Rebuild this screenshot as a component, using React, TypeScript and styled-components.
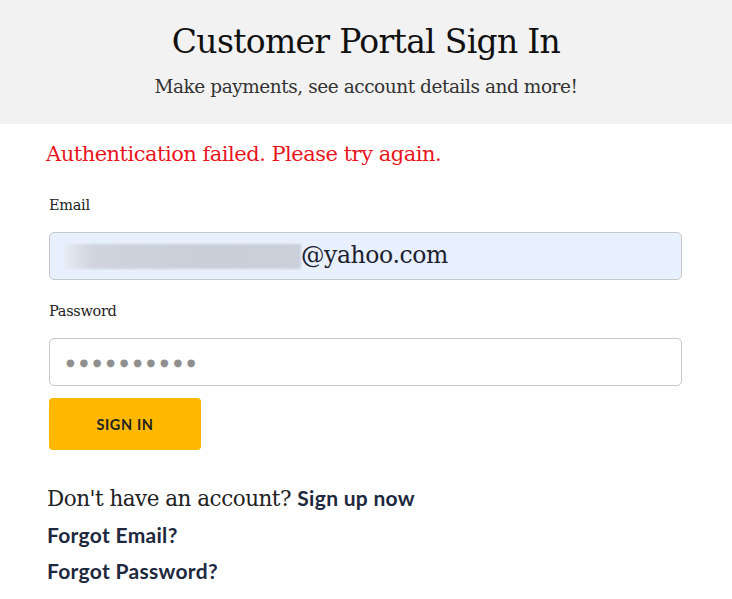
import React from "react";
import styled, { createGlobalStyle } from "styled-components";

const Global = createGlobalStyle`
  html, body { margin: 0; padding: 0; background: #ffffff; }
  body { font-family: "DejaVu Serif", serif; color: #222; }
`;

const serif = `"DejaVu Serif", serif`;
const sans = `"Lato", "Open Sans", sans-serif`;

const Page = styled.div`
  width: 732px;
  min-height: 599px;
  display: flex;
  flex-direction: column;
`;

const Header = styled.header`
  height: 124px;
  background: #f2f2f2;
  display: flex;
  flex-direction: column;
  align-items: center;
  box-sizing: border-box;
  padding-top: 21px;
`;

const Title = styled.h1`
  margin: 0;
  font-family: ${serif};
  font-weight: 400;
  font-size: 33px;
  line-height: 42px;
  color: #111;
  letter-spacing: -0.7px;
`;

const Subtitle = styled.p`
  margin: 12px 0 0;
  font-family: ${serif};
  font-size: 18.5px;
  line-height: 24px;
  color: #333;
  letter-spacing: -0.45px;
`;

const Main = styled.main`
  display: flex;
  flex-direction: column;
  padding: 16px 50px 0 47px;
`;

const ErrorText = styled.div`
  font-family: ${serif};
  font-size: 21px;
  line-height: 28px;
  color: #e8151d;
  letter-spacing: -0.5px;
  margin-left: -1px;
`;

const Field = styled.div<{ $top: number }>`
  display: flex;
  flex-direction: column;
  margin-top: ${(p) => p.$top}px;
`;

const Label = styled.label`
  font-family: ${serif};
  font-size: 14.5px;
  line-height: 20px;
  color: #222;
  margin-left: 2px;
  letter-spacing: -0.3px;
`;

const InputBox = styled.div<{ $filled?: boolean }>`
  margin-top: 17px;
  margin-left: 2px;
  height: 48px;
  box-sizing: border-box;
  border: 1px solid #c8c8c8;
  border-radius: 5px;
  background: ${(p) => (p.$filled ? "#e8f0fe" : "#ffffff")};
  display: flex;
  align-items: center;
  padding-left: 15px;
`;

const Blur = styled.span`
  display: inline-block;
  width: 236px;
  height: 25px;
  background: linear-gradient(90deg, #e6ebf3 0%, #cfd4de 12%, #c9ced9 60%, #cbd0db 100%);
  filter: blur(1px);
`;

const EmailText = styled.span`
  font-family: ${serif};
  font-size: 23.5px;
  color: #1d2230;
  letter-spacing: -0.4px;
  margin-top: -2px;
`;

const Dots = styled.span`
  font-family: "DejaVu Sans", sans-serif;
  font-size: 10px;
  letter-spacing: 4.7px;
  color: #8f8f8f;
  margin-left: 1px;
`;

const Button = styled.button`
  margin-top: 12px;
  margin-left: 2px;
  width: 152px;
  height: 52px;
  border: none;
  border-radius: 4px;
  background: #ffb800;
  font-family: ${sans};
  font-weight: 700;
  font-size: 14.5px;
  letter-spacing: 0.6px;
  color: #222;
  cursor: pointer;
`;

const Links = styled.div`
  margin-top: 33px;
  display: flex;
  flex-direction: column;
  gap: 6px;
`;

const Line = styled.div`
  font-family: ${serif};
  font-size: 21.5px;
  line-height: 30px;
  color: #222;
  letter-spacing: -0.5px;
`;

const BoldLink = styled.a`
  font-family: ${sans};
  font-weight: 700;
  font-size: 21px;
  line-height: 30px;
  color: #1e2940;
  text-decoration: none;
  letter-spacing: 0.3px;
`;

export default function App() {
  return (
    <>
      <Global />
      <Page>
        <Header>
          <Title>Customer Portal Sign In</Title>
          <Subtitle>Make payments, see account details and more!</Subtitle>
        </Header>
        <Main>
          <ErrorText>Authentication failed. Please try again.</ErrorText>
          <Field $top={27}>
            <Label>Email</Label>
            <InputBox $filled>
              <Blur />
              <EmailText>@yahoo.com</EmailText>
            </InputBox>
          </Field>
          <Field $top={21}>
            <Label>Password</Label>
            <InputBox>
              <Dots>●●●●●●●●●●</Dots>
            </InputBox>
          </Field>
          <Button>SIGN IN</Button>
          <Links>
            <Line>
              Don't have an account? <BoldLink href="#">Sign up now</BoldLink>
            </Line>
            <BoldLink href="#">Forgot Email?</BoldLink>
            <BoldLink href="#">Forgot Password?</BoldLink>
          </Links>
        </Main>
      </Page>
    </>
  );
}
